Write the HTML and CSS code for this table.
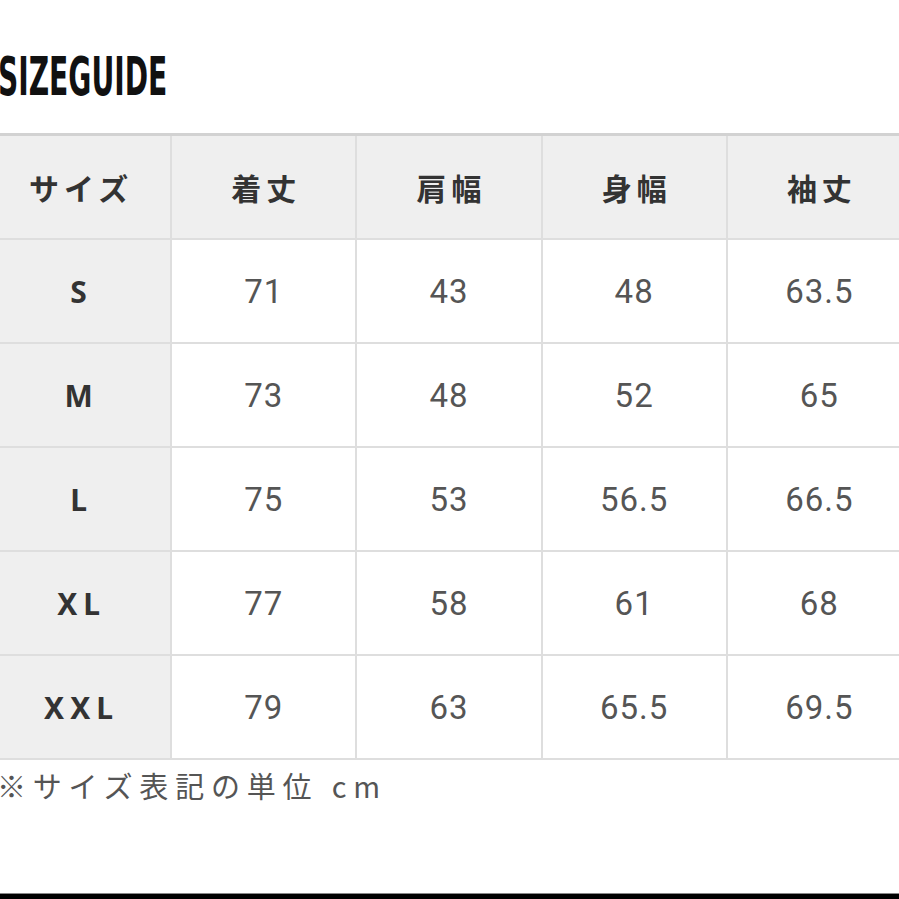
FILE: index.html
```
<!DOCTYPE html>
<html lang="ja">
<head>
<meta charset="utf-8">
<link rel="stylesheet" href="styles.css">
</head>
<body>
<main class="page">
  <h1 class="title">SIZEGUIDE</h1>
  <table class="sizes">
    <thead>
      <tr><th>サイズ</th><th>着丈</th><th>肩幅</th><th>身幅</th><th>袖丈</th></tr>
    </thead>
    <tbody>
      <tr><th>S</th><td>71</td><td>43</td><td>48</td><td>63.5</td></tr>
      <tr><th>M</th><td>73</td><td>48</td><td>52</td><td>65</td></tr>
      <tr><th>L</th><td>75</td><td>53</td><td>56.5</td><td>66.5</td></tr>
      <tr><th>XL</th><td>77</td><td>58</td><td>61</td><td>68</td></tr>
      <tr><th>XXL</th><td>79</td><td>63</td><td>65.5</td><td>69.5</td></tr>
    </tbody>
  </table>
  <p class="note">※サイズ表記の単位 cm</p>
  <div class="bar"></div>
</main>
</body>
</html>
```
FILE: styles.css
```
html, body {
  margin: 0;
  padding: 0;
  background: #fff;
  overflow: hidden;
}
.page {
  width: 899px;
  height: 899px;
  position: relative;
  overflow: hidden;
  font-family: "Noto Sans CJK JP", "Noto Sans", sans-serif;
}
.title {
  margin: 0;
  padding-top: 47px;
  height: 133px;
  box-sizing: border-box;
  margin-left: -2px;
  font-family: "Liberation Sans Narrow", "DejaVu Sans Condensed", sans-serif;
  font-weight: 700;
  font-size: 53px;
  line-height: 60px;
  color: #111;
  transform: scaleX(0.59);
  transform-origin: left top;
  white-space: nowrap;
}
.sizes {
  margin-left: -15px;
  width: 928px;
  table-layout: fixed;
  border-collapse: collapse;
  border-top: 3px solid #d2d2d2;
  border-bottom: 2px solid #d8d8d8;
}
.sizes th, .sizes td {
  height: 102px;
  padding: 0;
  text-align: center;
  vertical-align: middle;
  border: 2px solid #dedede;
}
.sizes thead th {
  background: #efefef;
  color: #333;
  font-weight: 700;
  font-size: 30px;
  letter-spacing: 5px;
  text-indent: 5px;
}
.sizes tbody th {
  background: #efefef;
  color: #333;
  font-family: "Noto Sans", sans-serif;
  font-weight: 700;
  font-size: 30px;
  letter-spacing: 6px;
  text-indent: 6px;
}
.sizes td {
  background: #fff;
  color: #555;
  font-family: Roboto, "Noto Sans", sans-serif;
  font-size: 33px;
  letter-spacing: 1px;
}
.note {
  margin: 5px 0 0 -3px;
  font-size: 29px;
  line-height: 40px;
  letter-spacing: 6.8px;
  color: #555;
}
.bar {
  position: absolute;
  left: 0;
  right: 0;
  bottom: 0;
  height: 5px;
  background: #000;
  border-top: 1px solid #888;
}
```
